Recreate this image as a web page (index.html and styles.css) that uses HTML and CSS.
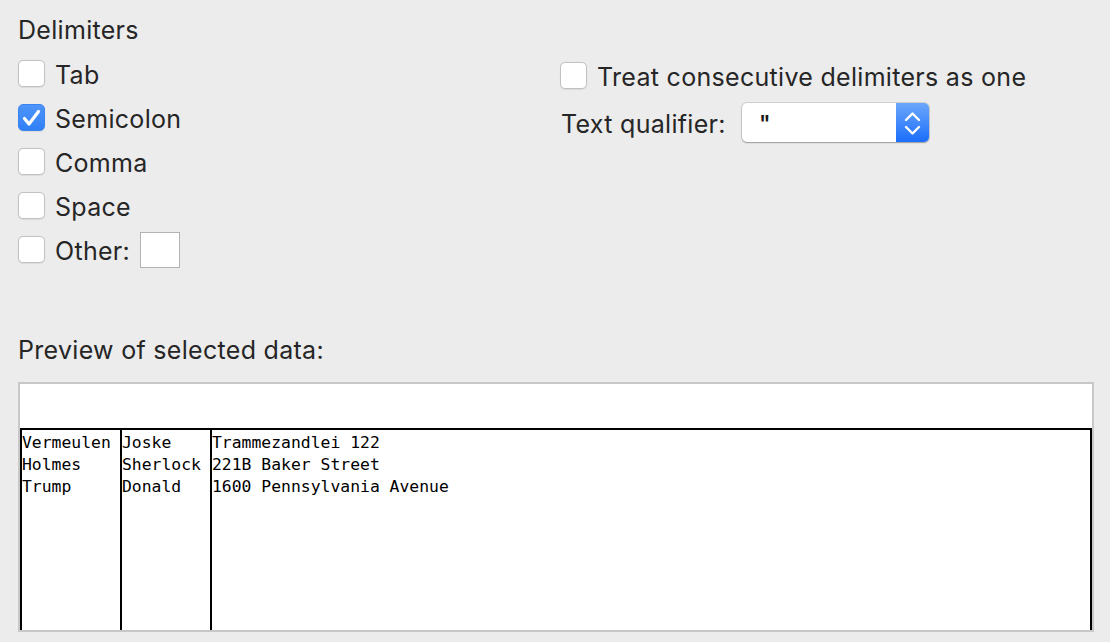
FILE: index.html
```html
<!DOCTYPE html>
<html>
<head>
<meta charset="utf-8">
<link rel="stylesheet" href="styles.css">
</head>
<body>
<div class="page">
  <div class="options">
    <div class="col-left">
      <div class="title">Delimiters</div>
      <div class="checklist">
        <label class="row"><span class="cb"></span><span class="txt">Tab</span></label>
        <label class="row"><span class="cb checked"><svg viewBox="0 0 27 27" width="27" height="27"><path d="M6.5 14.5 L11 20 L20.5 7.5" fill="none" stroke="#fff" stroke-width="3.2" stroke-linecap="round" stroke-linejoin="round"/></svg></span><span class="txt">Semicolon</span></label>
        <label class="row"><span class="cb"></span><span class="txt">Comma</span></label>
        <label class="row"><span class="cb"></span><span class="txt">Space</span></label>
        <label class="row"><span class="cb"></span><span class="txt">Other:</span><span class="field"></span></label>
      </div>
    </div>
    <div class="col-right">
      <label class="row"><span class="cb"></span><span class="txt">Treat consecutive delimiters as one</span></label>
      <div class="qualifier">
        <span class="qlabel">Text qualifier:</span>
        <div class="select">
          <span class="value">"</span>
          <span class="stepper">
            <svg viewBox="0 0 33 39" width="33" height="39"><path d="M10 17 L16.5 10.5 L23 17" fill="none" stroke="#fff" stroke-width="2.4" stroke-linecap="round" stroke-linejoin="round"/><path d="M10 24 L16.5 30.5 L23 24" fill="none" stroke="#fff" stroke-width="2.4" stroke-linecap="round" stroke-linejoin="round"/></svg>
          </span>
        </div>
      </div>
    </div>
  </div>
  <div class="preview-label">Preview of selected data:</div>
  <div class="preview">
    <div class="preview-head"></div>
    <div class="table">
      <div class="tcol c1"><div>Vermeulen</div><div>Holmes</div><div>Trump</div></div>
      <div class="tcol c2"><div>Joske</div><div>Sherlock</div><div>Donald</div></div>
      <div class="tcol c3"><div>Trammezandlei 122</div><div>221B Baker Street</div><div>1600 Pennsylvania Avenue</div></div>
    </div>
  </div>
</div>
</body>
</html>
```
FILE: styles.css
```css
* { box-sizing: border-box; }
html, body {
  margin: 0;
  padding: 0;
  background: #ececec;
}
body {
  font-family: "Inter", "Roboto", "Liberation Sans", sans-serif;
  font-size: 25px;
  letter-spacing: 0.3px;
  color: #262626;
  width: 1110px;
  height: 642px;
  overflow: hidden;
}
.page {
  padding: 15px 0 0 18px;
}
.options {
  display: flex;
}
.col-left {
  width: 542px;
}
.title {
  line-height: 28px;
  height: 28px;
  padding-top: 1px;
}
.checklist {
  margin-top: 17px;
  display: flex;
  flex-direction: column;
  gap: 17px;
}
.row {
  display: flex;
  align-items: center;
  height: 27px;
  gap: 10px;
}
.txt {
  line-height: 28px;
  padding-top: 3px;
}
.cb {
  width: 27px;
  height: 27px;
  flex: none;
  background: #fff;
  border: 1px solid #c2c2c2;
  border-radius: 5px;
  box-shadow: 0 0.5px 1px rgba(0,0,0,0.08);
  position: relative;
}
.cb.checked {
  background: linear-gradient(#4e95f8, #2f7ff6);
  border-color: #3a84f2;
}
.cb.checked svg {
  position: absolute;
  left: -1px;
  top: -1px;
}
.field {
  width: 40px;
  height: 36px;
  background: #fff;
  border: 1px solid #b3b3b3;
  flex: none;
}
.col-right {
  padding-top: 47px;
}
.qualifier {
  display: flex;
  align-items: center;
  margin-top: 14px;
  margin-left: 1px;
}
.qlabel {
  width: 181px;
  line-height: 28px;
  padding-top: 2px;
}
.select {
  width: 187px;
  height: 39px;
  background: #fff;
  border-radius: 5px;
  box-shadow: 0 0 0 1px rgba(0,0,0,0.12), 0 1px 1.5px rgba(0,0,0,0.25);
  display: flex;
  align-items: center;
  justify-content: space-between;
  overflow: hidden;
}
.value {
  padding-left: 17px;
  font-size: 22px;
  color: #1a1a1a;
  font-weight: 600;
}
.stepper {
  width: 33px;
  height: 39px;
  background: linear-gradient(#6ba7fb, #1b6dfb);
  display: block;
}
.stepper svg { display: block; }
.preview-label {
  margin-top: 73px;
  line-height: 28px;
  height: 28px;
}
.preview {
  margin-top: 18px;
  width: 1076px;
  height: 250px;
  border: 2px solid #c8c8c8;
  background: #fff;
  display: flex;
  flex-direction: column;
  letter-spacing: 0;
}
.preview-head {
  height: 44px;
  flex: none;
}
.table {
  flex: 1;
  display: flex;
  border: 2px solid #000;
  border-bottom: none;
  font-family: "DejaVu Sans Mono", "Liberation Mono", monospace;
  font-size: 16.4px;
  line-height: 22px;
  color: #000;
}
.tcol {
  padding-top: 2px;
  white-space: nowrap;
}
.c1 { width: 98px; }
.c2 { width: 90px; border-left: 2px solid #000; }
.c3 { flex: 1; border-left: 2px solid #000; }
```
